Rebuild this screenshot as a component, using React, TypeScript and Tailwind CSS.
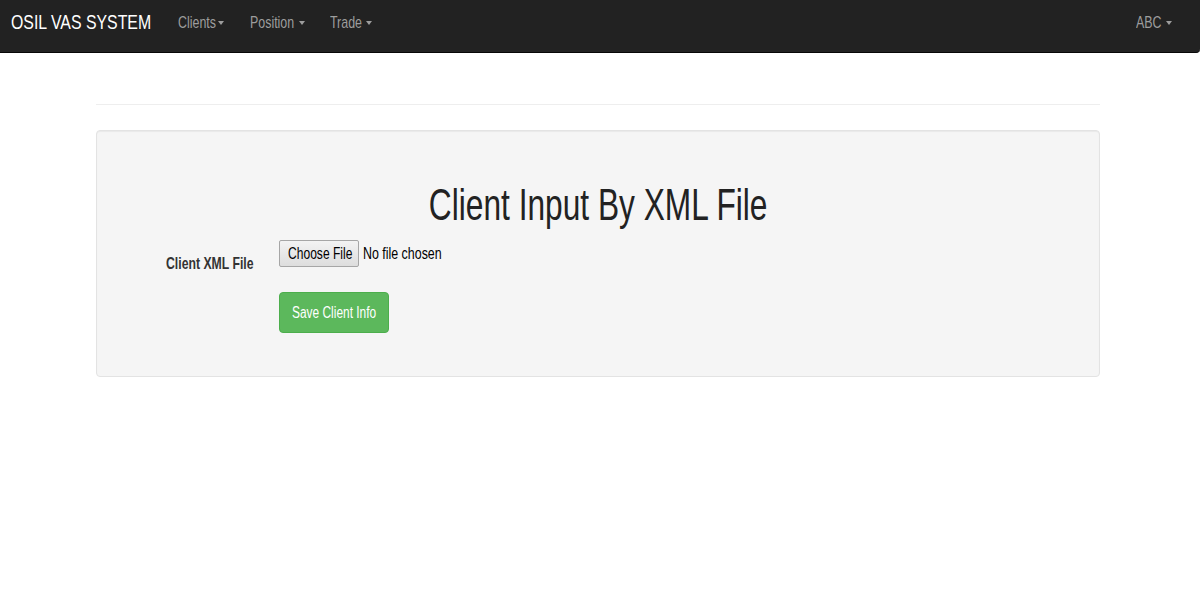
import { useState } from "react";

// the screenshot is squeezed horizontally, so text gets a fixed box and a scale-x
const squeeze = "inline-block origin-left scale-x-[0.73] whitespace-nowrap";

const navItems = [
  { label: "Clients", box: "w-[37px]", item: "w-[72px]" },
  { label: "Position", box: "w-[46px]", item: "w-[80px]" },
  { label: "Trade", box: "w-[33px]", item: "w-[60px]" },
];

function Caret() {
  return (
    <span className="inline-block w-0 h-0 border-l-[3px] border-r-[3px] border-t-[4px] border-l-transparent border-r-transparent border-t-current" />
  );
}

function Navbar() {
  return (
    <nav className="h-[53px] bg-[#222222] border-b border-[#080808] rounded-br-[4px] flex items-start justify-between">
      <div className="flex items-start">
        <a className="ml-[11px] mt-[11px] w-[167px] text-[21px] leading-[21px] text-white">
          <span className="inline-block origin-left scale-x-[0.755] whitespace-nowrap">OSIL VAS SYSTEM</span>
        </a>
        <ul className="flex mt-[14px]">
          {navItems.map((n) => (
            <li
              key={n.label}
              className={`${n.item} flex items-center gap-[3px] text-[17px] leading-[17px] text-[#9d9d9d]`}
            >
              <span className={`${n.box} inline-block`}>
                <span className={squeeze}>{n.label}</span>
              </span>
              <Caret />
            </li>
          ))}
        </ul>
      </div>
      <div className="mt-[14px] mr-[28px] flex items-center gap-[4px] text-[17px] leading-[17px] text-[#9d9d9d]">
        <span className="w-[26px] inline-block">
          <span className={squeeze}>ABC</span>
        </span>
        <Caret />
      </div>
    </nav>
  );
}

export default function App() {
  const [fileName, setFileName] = useState("");

  return (
    <div className="min-h-[600px] bg-white font-['Liberation_Sans',Arial,sans-serif] text-[#333]">
      <Navbar />

      <div className="mx-[96px] w-[1004px]">
        <hr className="mt-[51px] border-t border-[#eeeeee]" />

        {/* Upload panel */}
        <div className="mt-[25px] h-[247px] bg-[#f5f5f5] border border-[#e3e3e3] rounded-[4px] shadow-[inset_0_1px_1px_rgba(0,0,0,0.05)] pt-[52px]">
          <h1 className="text-center text-[44px] leading-[44px] text-[#222]">
            <span className="inline-block origin-center scale-x-[0.72] whitespace-nowrap">
              Client Input By XML File
            </span>
          </h1>

          <div className="mt-[13px] flex">
            <label className="w-[157px] flex justify-end pt-[15px] font-bold text-[17px] leading-[17px] text-[#333]">
              <span className="w-[88px] inline-block">
                <span className="inline-block origin-left scale-x-[0.72] whitespace-nowrap">Client XML File</span>
              </span>
            </label>
            <div className="ml-[25px] flex flex-col items-start">
              <div className="flex items-center h-[27px]">
                <label className="h-[27px] w-[80px] pl-[8px] flex items-center bg-gradient-to-b from-[#f3f3f3] to-[#dddddd] border border-[#a6a6a6] rounded-[2px] text-[17px] leading-[17px] text-black cursor-pointer">
                  <span className="inline-block origin-left scale-x-[0.71] whitespace-nowrap">Choose File</span>
                  <input
                    type="file"
                    className="hidden"
                    onChange={(e) => setFileName(e.target.files?.[0]?.name || "")}
                  />
                </label>
                <span className="ml-[4px] text-[17px] leading-[17px] text-black">
                  <span className={squeeze}>{fileName || "No file chosen"}</span>
                </span>
              </div>
              <button className="mt-[25px] h-[41px] w-[110px] pl-[12px] flex items-center bg-[#5cb85c] border border-[#4cae4c] rounded-[4px] text-white text-[16px] leading-[16px]">
                <span className="inline-block origin-left scale-x-[0.745] whitespace-nowrap">Save Client Info</span>
              </button>
            </div>
          </div>
        </div>
      </div>
    </div>
  );
}
